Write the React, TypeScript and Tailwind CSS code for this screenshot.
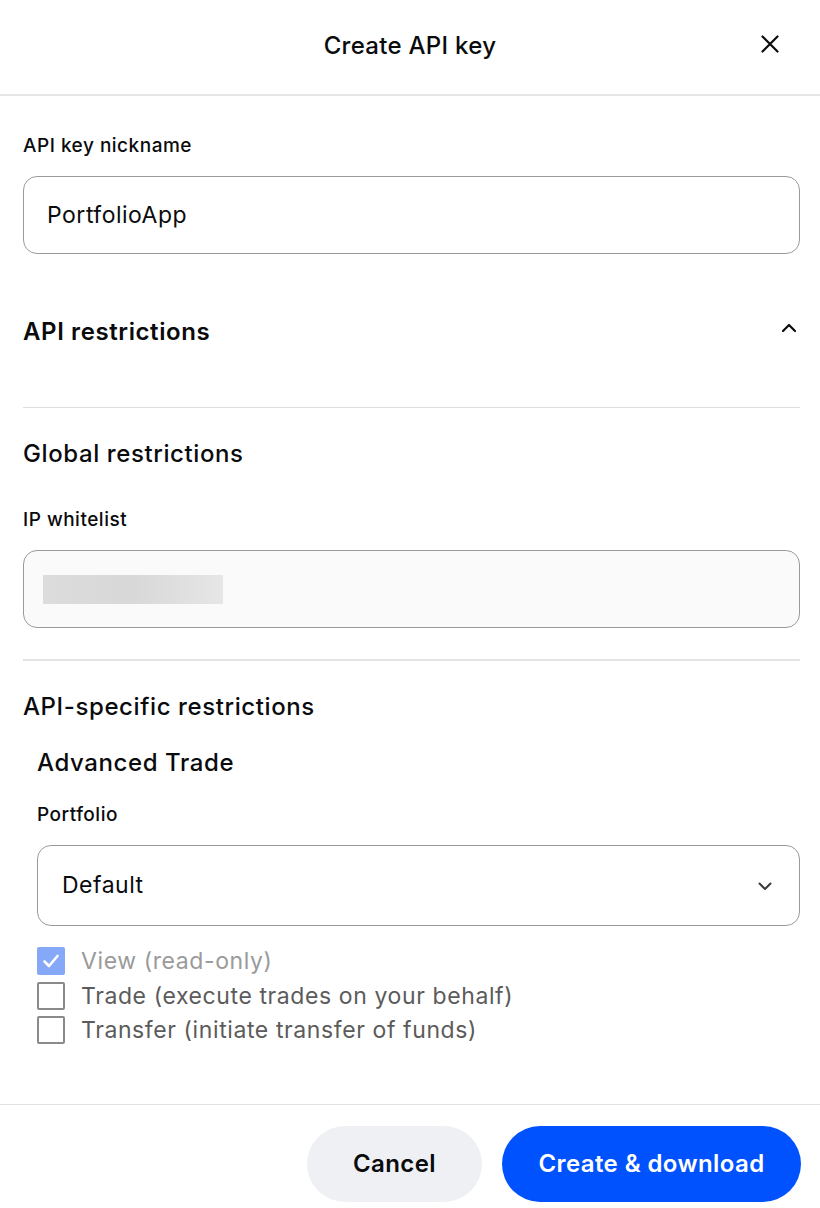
import React from "react";

function Check({ checked }: { checked?: boolean }) {
  if (checked) {
    return (
      <span className="flex h-[28px] w-[28px] shrink-0 items-center justify-center rounded-[2px] bg-[#86a8f8]">
        <svg width="20" height="20" viewBox="0 0 20 20" fill="none">
          <path d="M3.5 10.5l4.5 4.5L16.5 5" stroke="white" strokeWidth="2.6" strokeLinecap="round" strokeLinejoin="round" />
        </svg>
      </span>
    );
  }
  return <span className="block h-[28px] w-[28px] shrink-0 rounded-[2px] border-2 border-[#8a8a8a] bg-white" />;
}

export default function App() {
  return (
    <div className="min-h-[1208px] w-[820px] bg-white text-[#0a0b0d]" style={{ fontFamily: "Inter, 'Noto Sans', sans-serif" }}>
      {/* Header */}
      <div className="relative flex h-[96px] items-center justify-center border-b-2 border-[#e6e6e6]">
        <h1 className="mb-[3px] text-[24px] font-medium tracking-[0.3px]">Create API key</h1>
        <button className="absolute right-[38px] top-[32px] flex h-[24px] w-[24px] items-center justify-center">
          <svg width="20" height="20" viewBox="0 0 20 20" fill="none">
            <path d="M2.5 2.5l15 15M17.5 2.5l-15 15" stroke="#0a0b0d" strokeWidth="2.2" strokeLinecap="round" />
          </svg>
        </button>
      </div>

      <div className="pl-[23px] pr-[20px]">
        {/* Nickname */}
        <div className="pt-[38px] text-[19px] font-medium leading-[24px] tracking-[0.5px]">API key nickname</div>
        <div className="mt-[18px] flex h-[78px] items-center rounded-[14px] border border-[#9a9a9a] px-[23px] text-[23px] tracking-[0.5px]">
          PortfolioApp
        </div>

        {/* API restrictions */}
        <div className="flex items-start justify-between pt-[62px]">
          <div className="text-[24px] font-semibold leading-[32px] tracking-[0.6px]">API restrictions</div>
          <svg className="mr-[2px] mt-[3px]" width="18" height="18" viewBox="0 0 18 18" fill="none">
            <path d="M3 12l6-6 6 6" stroke="#0a0b0d" strokeWidth="2.2" strokeLinecap="round" strokeLinejoin="round" />
          </svg>
        </div>
        <div className="mt-[59px] h-px bg-[#dedede]" />

        {/* Global restrictions */}
        <div className="pt-[30px] text-[24px] font-medium leading-[32px] tracking-[0.6px]">Global restrictions</div>
        <div className="pt-[38px] text-[19px] font-medium leading-[24px] tracking-[0.5px]">IP whitelist</div>
        <div className="mt-[18px] flex h-[78px] items-center rounded-[14px] border border-[#9a9a9a] bg-[#fafafa] px-[19px]">
          <div className="h-[29px] w-[180px] bg-gradient-to-r from-[#dcdcdc] via-[#d8d8d8] to-[#e6e6e6]" />
        </div>
        <div className="mt-[31px] h-[2px] bg-[#e3e3e3]" />

        {/* API-specific */}
        <div className="pt-[30px] text-[24px] font-medium leading-[32px] tracking-[0.6px]">API-specific restrictions</div>
        <div className="pl-[14px]">
          <div className="pt-[24px] text-[24px] font-medium leading-[32px] tracking-[0.6px]">Advanced Trade</div>
          <div className="pt-[24px] text-[19px] font-medium leading-[24px] tracking-[0.5px]">Portfolio</div>
          <div className="mt-[18px] flex h-[81px] items-center justify-between rounded-[14px] border border-[#9a9a9a] pl-[24px] pr-[26px] text-[23px] tracking-[0.5px]">
            <span>Default</span>
            <svg width="16" height="16" viewBox="0 0 16 16" fill="none">
              <path d="M2.5 5.5L8 11l5.5-5.5" stroke="#3a3a3a" strokeWidth="2" strokeLinecap="round" strokeLinejoin="round" />
            </svg>
          </div>

          <div className="mt-[21px] flex flex-col gap-[6.5px]">
            <div className="flex items-center gap-[16px]">
              <Check checked />
              <span className="text-[23px] leading-[28px] tracking-[0.6px] text-[#9a9a9a]">View (read-only)</span>
            </div>
            <div className="flex items-center gap-[16px]">
              <Check />
              <span className="text-[23px] leading-[28px] tracking-[0.6px] text-[#5b5b5b]">Trade (execute trades on your behalf)</span>
            </div>
            <div className="flex items-center gap-[16px]">
              <Check />
              <span className="text-[23px] leading-[28px] tracking-[0.6px] text-[#5b5b5b]">Transfer (initiate transfer of funds)</span>
            </div>
          </div>
        </div>
      </div>

      {/* Footer */}
      <div className="mt-[60px] flex justify-end gap-[20px] border-t border-[#e2e2e2] pr-[19px] pt-[21px]">
        <button className="h-[76px] w-[175px] rounded-full bg-[#eef0f3] text-[24px] font-semibold tracking-[0.4px]">Cancel</button>
        <button className="h-[76px] w-[299px] rounded-full bg-[#0052ff] text-[24px] font-semibold tracking-[0.4px] text-white">Create &amp; download</button>
      </div>
    </div>
  );
}
